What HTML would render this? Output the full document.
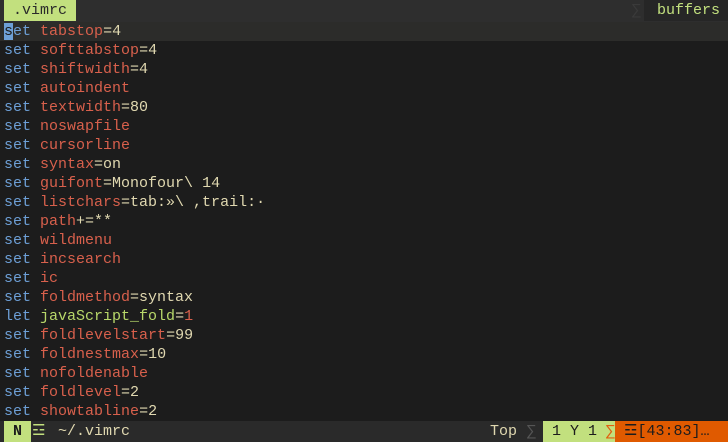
<!DOCTYPE html><html><head><style>
body{margin:0;width:728px;height:442px;background:#1c1c1c;overflow:hidden;font-family:"Liberation Mono",monospace;font-size:15px;}
.tab{position:absolute;left:0;top:0;width:728px;height:22px;background:#2e2e2e;}
.t1{position:absolute;left:4px;top:0;width:72px;height:21px;background:#c2e07e;color:#2a2a2a;line-height:21px;padding-left:9px;box-sizing:border-box;}
.buf{position:absolute;right:0;top:0;width:84px;height:21px;background:#262626;color:#c2e07e;line-height:21px;padding-left:13px;box-sizing:border-box;}
.sig{position:absolute;left:632px;top:0;color:#3a3a3a;line-height:21px}
.body{position:absolute;top:22px;left:0;width:728px}
.l{height:19px;line-height:19px;padding-left:4px;white-space:pre;color:#e0d8b0}
.cl{background:#2c2c2a}
.k{color:#6d9fd6}.o{color:#d8604c}.g{color:#b8d86a}.n{color:#d8604c}
.cur{background:#6d9fd6;color:#1c1c1c}
.st{position:absolute;top:421px;left:0;width:728px;height:21px;background:#2a2a2a;line-height:21px;white-space:pre;color:#e0d8b0}
</style></head><body>
<div class="tab"><div class="t1">.vimrc</div><span class="sig">∑</span><div class="buf">buffers</div></div>
<div class="body">
<div class="l cl"><span class="cur">s</span><span class="k">et</span> <span class="o">tabstop</span>=4</div>
<div class="l"><span class="k">set</span> <span class="o">softtabstop</span>=4</div>
<div class="l"><span class="k">set</span> <span class="o">shiftwidth</span>=4</div>
<div class="l"><span class="k">set</span> <span class="o">autoindent</span></div>
<div class="l"><span class="k">set</span> <span class="o">textwidth</span>=80</div>
<div class="l"><span class="k">set</span> <span class="o">noswapfile</span></div>
<div class="l"><span class="k">set</span> <span class="o">cursorline</span></div>
<div class="l"><span class="k">set</span> <span class="o">syntax</span>=on</div>
<div class="l"><span class="k">set</span> <span class="o">guifont</span>=Monofour\ 14</div>
<div class="l"><span class="k">set</span> <span class="o">listchars</span>=tab:»\ ,trail:·</div>
<div class="l"><span class="k">set</span> <span class="o">path</span>+=**</div>
<div class="l"><span class="k">set</span> <span class="o">wildmenu</span></div>
<div class="l"><span class="k">set</span> <span class="o">incsearch</span></div>
<div class="l"><span class="k">set</span> <span class="o">ic</span></div>
<div class="l"><span class="k">set</span> <span class="o">foldmethod</span>=syntax</div>
<div class="l"><span class="k">let</span> <span class="g">javaScript_fold</span>=<span class="n">1</span></div>
<div class="l"><span class="k">set</span> <span class="o">foldlevelstart</span>=99</div>
<div class="l"><span class="k">set</span> <span class="o">foldnestmax</span>=10</div>
<div class="l"><span class="k">set</span> <span class="o">nofoldenable</span></div>
<div class="l"><span class="k">set</span> <span class="o">foldlevel</span>=2</div>
<div class="l"><span class="k">set</span> <span class="o">showtabline</span>=2</div>
</div>
<div class="st"><span style="position:absolute;left:4px;width:27px;background:#c2e07e;color:#1c1c1c;font-weight:bold;text-align:center">N</span><span style="position:absolute;left:32px;color:#c2e07e">☲</span><span style="position:absolute;left:58px">~/.vimrc</span><span style="position:absolute;left:490px">Top</span><span style="position:absolute;left:527px;color:#555">∑</span><span style="position:absolute;left:543px;width:72px;background:#c2e07e;color:#1c1c1c"> 1 Ү 1 <span style="color:#e06010">∑</span></span><span style="position:absolute;left:615px;width:113px;background:#e05a00;color:#1c1c1c"> ☲[43:83]…</span></div>
</body></html>
